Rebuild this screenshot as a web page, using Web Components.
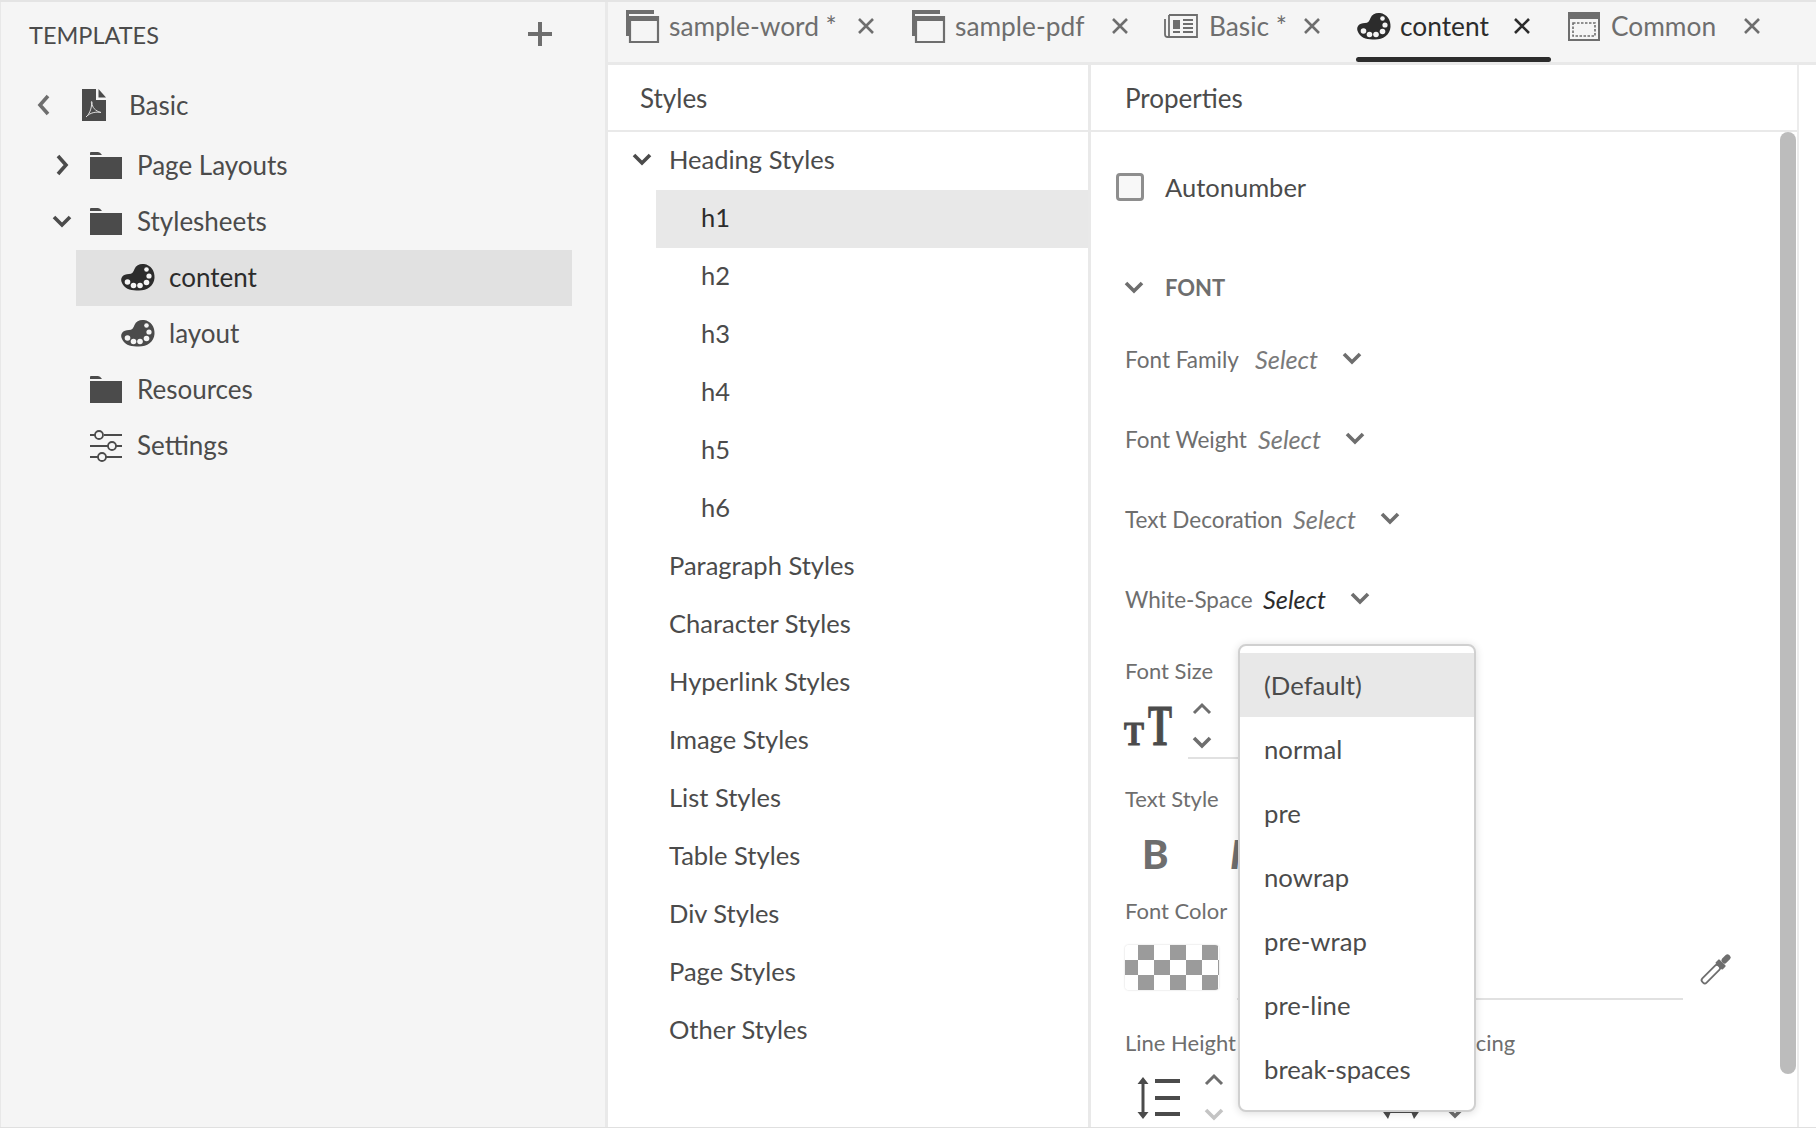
<!DOCTYPE html>
<html>
<head>
<meta charset="utf-8">
<title>Templates</title>
<style>
  html, body { margin: 0; height: 100%; background: #fff; overflow: hidden; }
  body { font-family: Lato, "Open Sans", sans-serif; }
</style>
</head>
<body>
<app-shell>
  <template-tree slot="side">
    <tree-row icon="pdf" twisty="left" style="--left:32px;--tw:26px;--gap:23px;--h:60px;margin-bottom:2px">Basic</tree-row>
    <tree-row icon="folder" twisty="right" style="--left:50px;--tw:16px;--gap:15px">Page Layouts</tree-row>
    <tree-row icon="folder" twisty="down" style="--left:50px;--tw:16px;--gap:15px">Stylesheets</tree-row>
    <tree-row icon="palette" selected style="--left:44px;--gap:14px;--mark:76px">content</tree-row>
    <tree-row icon="palette" style="--left:120px;--gap:14px">layout</tree-row>
    <tree-row icon="folder" style="--left:90px;--gap:15px">Resources</tree-row>
    <tree-row icon="sliders" style="--left:90px;--gap:15px">Settings</tree-row>
  </template-tree>

  <tab-bar slot="tabs">
    <doc-tab icon="window" width="286">sample-word *</doc-tab>
    <doc-tab icon="window" width="252" style="--x:35px">sample-pdf</doc-tab>
    <doc-tab icon="news" width="192" style="--x:35px">Basic *</doc-tab>
    <doc-tab icon="palette" width="212" active>content</doc-tab>
    <doc-tab icon="frame" width="230">Common</doc-tab>
  </tab-bar>

  <styles-panel slot="styles">
    <style-row open>Heading Styles</style-row>
    <style-row sub selected>h1</style-row>
    <style-row sub>h2</style-row>
    <style-row sub>h3</style-row>
    <style-row sub>h4</style-row>
    <style-row sub>h5</style-row>
    <style-row sub>h6</style-row>
    <style-row>Paragraph Styles</style-row>
    <style-row>Character Styles</style-row>
    <style-row>Hyperlink Styles</style-row>
    <style-row>Image Styles</style-row>
    <style-row>List Styles</style-row>
    <style-row>Table Styles</style-row>
    <style-row>Div Styles</style-row>
    <style-row>Page Styles</style-row>
    <style-row>Other Styles</style-row>
  </styles-panel>

  <props-panel slot="props">
    <select-field label="Font Family" width="130">Select</select-field>
    <select-field label="Font Weight" width="133">Select</select-field>
    <select-field label="Text Decoration" width="168">Select</select-field>
    <select-field label="White-Space" width="138" active>Select</select-field>
    <drop-menu slot="menu">
      <menu-item selected>(Default)</menu-item>
      <menu-item>normal</menu-item>
      <menu-item>pre</menu-item>
      <menu-item>nowrap</menu-item>
      <menu-item>pre-wrap</menu-item>
      <menu-item>pre-line</menu-item>
      <menu-item>break-spaces</menu-item>
    </drop-menu>
  </props-panel>
</app-shell>

<script>
const ICONS = {
  chevronLeft: [14, 24, '<path d="M11 3 3 12l8 9" fill="none" stroke="currentColor" stroke-width="3.6"/>'],
  chevronRight: [14, 24, '<path d="M3 3l8 9-8 9" fill="none" stroke="currentColor" stroke-width="3.6"/>'],
  chevronDown: [20, 14, '<path d="M2 3l8 8 8-8" fill="none" stroke="currentColor" stroke-width="3.6"/>'],
  chevronUp: [20, 14, '<path d="M2 11l8-8 8 8" fill="none" stroke="currentColor" stroke-width="3"/>'],
  plus: [24, 24, '<path d="M12 0v24M0 12h24" fill="none" stroke="currentColor" stroke-width="4"/>'],
  close: [18, 18, '<path d="M2 2l14 14M16 2 2 16" fill="none" stroke="currentColor" stroke-width="2.6"/>'],
  folder: [32, 28, '<path d="M0 4V2q0-1 1-1h7q2 0 4 3z" fill="currentColor"/><path d="M0 6h32v22H0z" fill="currentColor"/>'],
  pdf: [24, 32, '<path d="M0 0h14v11h10v21H0z" fill="currentColor"/><path d="M16.500 0 24 8.500h-7.500z" fill="currentColor"/><path d="M4 28c3-2 6-9 5.500-14-1-2 1-2 .5 0 0 4 3 8 9 9.500-5-1-11 0-15 4.500z" fill="none" stroke="#ddd" stroke-width="1"/>'],
  palette: [35, 28, '<path d="M2.500 21C-1 15 3 11 9 11c3 0 4.500-2 5.500-5C16 2 20 .5 24 1c7 1 11 7 10.500 14C34 23 27 27.500 19 27.500 12 27.500 6 27 2.500 21z" fill="currentColor"/><g fill="#f5f5f5"><circle cx="7.500" cy="19" r="2.800"/><circle cx="13.500" cy="22.500" r="2.800"/><circle cx="20" cy="22.500" r="2.800"/><circle cx="26.500" cy="19.500" r="2.800"/><circle cx="29" cy="13" r="2.600"/><circle cx="26.500" cy="6.500" r="2.300"/></g>'],
  sliders: [32, 30, '<g fill="none" stroke="currentColor" stroke-width="1.800"><path d="M0 5h5M14 5h18M0 16h18M26 16h6M0 27h8M16 27h16"/><circle cx="9" cy="5" r="4"/><circle cx="22" cy="16" r="4"/><circle cx="12" cy="27" r="4"/></g>'],
  window: [32, 33, '<path d="M0 0h28v4H3v22H0z" fill="currentColor"/><path d="M4 7h28v25H4z" fill="none" stroke="currentColor" stroke-width="2.200"/><path d="M4 7h28v4H4z" fill="currentColor"/>'],
  news: [34, 24, '<g fill="none" stroke="currentColor" stroke-width="1.800"><path d="M5 1h28v22H5"/><path d="M5 1v22H3Q1 23 1 20V5"/><path d="M19 6h10M19 10h10M19 14h10M19 18h10M9 18h7"/></g><path d="M9 6h7v9H9z" fill="currentColor"/>'],
  frame: [32, 29, '<path d="M1 1h30v27H1z" fill="none" stroke="currentColor" stroke-width="2"/><path d="M0 0h32v7H0z" fill="currentColor"/><path d="M5 11h22v13H5z" fill="none" stroke="currentColor" stroke-width="1.600" stroke-dasharray="2.500 1.500"/>'],
  dropper: [33, 33, '<g transform="rotate(45 16.500 16.500)"><rect x="13.500" y="13" width="6" height="23" rx="2.500" fill="none" stroke="currentColor" stroke-width="1.800"/><rect x="11.500" y="8" width="10" height="5.500" rx="1" fill="currentColor"/><rect x="13.500" y="-2" width="6" height="10" rx="2.500" fill="currentColor"/></g>'],
  lineHeight: [42, 42, '<path d="M5 3v36" stroke="currentColor" stroke-width="3"/><path d="M5 0l5.500 7h-11zM5 42l5.500-7h-11z" fill="currentColor"/><path d="M17 4h25M17 21h25M17 37h25" stroke="currentColor" stroke-width="4"/>'],
  letterSpacing: [40, 44, '<path d="M5 34h30" stroke="currentColor" stroke-width="4"/><path d="M0 32h11l-4 10zM40 32H29l4 10z" fill="currentColor"/><path d="M4 20V4h32v16" fill="none" stroke="currentColor" stroke-width="4"/>']
};

class UiIcon extends HTMLElement {
  constructor() {
    super();
    this.attachShadow({ mode: 'open' });
  }
  connectedCallback() {
    const [w, h, body] = ICONS[this.getAttribute('name')];
    this.shadowRoot.innerHTML = `
      <style>
        :host { display: inline-flex; flex: none; }
        svg { display: block; overflow: visible; }
      </style>
      <svg width="${w}" height="${h}" viewBox="0 0 ${w} ${h}">${body}</svg>`;
  }
}

class AppShell extends HTMLElement {
  constructor() {
    super();
    this.attachShadow({ mode: 'open' });
  }
  connectedCallback() {
    this.shadowRoot.innerHTML = `
      <style>
        :host {
          display: grid;
          grid-template-columns: 605px 1fr;
          width: 1816px;
          height: 1128px;
          box-sizing: border-box;
          border-top: 2px solid #e4e4e4;
          border-bottom: 1px solid #e0e0e0;
          overflow: hidden;
        }
        .main { display: flex; flex-direction: column; border-left: 3px solid #e9e9e9; min-height: 0; }
        .panels { flex: 1; display: flex; min-height: 0; }
      </style>
      <slot name="side"></slot>
      <div class="main">
        <slot name="tabs"></slot>
        <div class="panels">
          <slot name="styles"></slot>
          <slot name="props"></slot>
        </div>
      </div>`;
  }
}

class TemplateTree extends HTMLElement {
  constructor() {
    super();
    this.attachShadow({ mode: 'open' });
  }
  connectedCallback() {
    this.shadowRoot.innerHTML = `
      <style>
        :host { display: block; background: #f5f5f5; color: #4b4b4b; font-size: 26px; box-shadow: inset 1px 0 0 #e8e8e8; }
        .head { display: flex; align-items: center; justify-content: space-between; height: 74px; padding: 0 53px 8px 29px; box-sizing: border-box; }
        .title { font-size: 23.500px; color: #4b4b4b; }
        ui-icon { color: #6e6e6e; margin-top: -2px; }
      </style>
      <div class="head"><span class="title">TEMPLATES</span><ui-icon name="plus"></ui-icon></div>
      <slot></slot>`;
  }
}

class TreeRow extends HTMLElement {
  constructor() {
    super();
    this.attachShadow({ mode: 'open' });
  }
  connectedCallback() {
    const tw = this.getAttribute('twisty');
    const name = { left: 'chevronLeft', right: 'chevronRight', down: 'chevronDown' }[tw];
    this.shadowRoot.innerHTML = `
      <style>
        :host {
          display: flex;
          align-items: center;
          height: var(--h, 56px);
          box-sizing: border-box;
          margin-left: var(--mark, 0);
          width: 496px;
          padding-left: var(--left, 0);
          padding-bottom: 2px;
          white-space: nowrap;
        }
        :host(:not([selected])) { width: auto; }
        :host([selected]) { background: #e1e1e1; color: #2c2c2c; }
        .tw { width: 24px; display: flex; justify-content: center; margin-right: var(--tw, 0); color: #4b4b4b; }
        .ic { display: flex; margin-right: var(--gap, 14px); }
        :host([twisty="left"]) .tw { color: #6e6e6e; }
      </style>
      ${name ? `<span class="tw"><ui-icon name="${name}"></ui-icon></span>` : ''}
      <span class="ic"><ui-icon name="${this.getAttribute('icon')}"></ui-icon></span>
      <slot></slot>`;
  }
}

class TabBar extends HTMLElement {
  constructor() {
    super();
    this.attachShadow({ mode: 'open' });
  }
  connectedCallback() {
    this.shadowRoot.innerHTML = `
      <style>
        :host { display: flex; flex: none; height: 63px; box-sizing: border-box; padding-left: 18px; background: #f5f5f5; border-bottom: 3px solid #e9e9e9; }
      </style>
      <slot></slot>`;
  }
}

class DocTab extends HTMLElement {
  constructor() {
    super();
    this.attachShadow({ mode: 'open' });
  }
  connectedCallback() {
    this.shadowRoot.innerHTML = `
      <style>
        :host { display: flex; flex-direction: column; flex: none; width: ${this.getAttribute('width')}px; color: #6e6e6e; font-size: 26.300px; white-space: nowrap; }
        :host([active]) { color: #2c2c2c; }
        .row { display: flex; align-items: center; height: 48px; margin-bottom: 7px; }
        .label { margin-left: 11px; }
        .x { margin-left: auto; margin-right: var(--x, 37px); display: flex; }
        .bar { height: 5px; width: 195px; border-radius: 3px; background: transparent; }
        :host([active]) .bar { background: #2c2c2c; }
        :host([active]) .label { margin-left: 9px; }
      </style>
      <div class="row">
        <ui-icon name="${this.getAttribute('icon')}"></ui-icon>
        <span class="label"><slot></slot></span>
        <span class="x"><ui-icon name="close"></ui-icon></span>
      </div>
      <div class="bar"></div>`;
  }
}

class PanelHead extends HTMLElement {
  constructor() {
    super();
    this.attachShadow({ mode: 'open' });
  }
  connectedCallback() {
    this.shadowRoot.innerHTML = `
      <style>
        :host { display: flex; align-items: center; flex: none; height: 67px; box-sizing: border-box; border-bottom: 2px solid #e9e9e9; font-size: 26px; color: #4b4b4b; }
      </style>
      <slot></slot>`;
  }
}

class StylesPanel extends HTMLElement {
  constructor() {
    super();
    this.attachShadow({ mode: 'open' });
  }
  connectedCallback() {
    this.shadowRoot.innerHTML = `
      <style>
        :host { display: flex; flex-direction: column; flex: none; width: 480px; box-sizing: content-box; border-right: 3px solid #e9e9e9; background: #fff; overflow: hidden; }
        panel-head { padding-left: 32px; }
      </style>
      <panel-head>Styles</panel-head>
      <slot></slot>`;
  }
}

class StyleRow extends HTMLElement {
  constructor() {
    super();
    this.attachShadow({ mode: 'open' });
  }
  connectedCallback() {
    const open = this.hasAttribute('open');
    this.shadowRoot.innerHTML = `
      <style>
        :host { display: flex; align-items: center; height: 58px; box-sizing: border-box; padding: 0 0 5px 61px; font-size: 25.500px; color: #4b4b4b; white-space: nowrap; }
        :host([sub]) { margin-left: 48px; padding-left: 45px; }
        :host([selected]) { background: #e8e8e8; color: #2c2c2c; }
        .tw { display: flex; width: 20px; margin-left: -37px; margin-right: 17px; }
      </style>
      ${open ? '<span class="tw"><ui-icon name="chevronDown"></ui-icon></span>' : ''}
      <slot></slot>`;
  }
}

class SelectField extends HTMLElement {
  constructor() {
    super();
    this.attachShadow({ mode: 'open' });
  }
  connectedCallback() {
    this.shadowRoot.innerHTML = `
      <style>
        :host { display: flex; align-items: center; height: 80px; white-space: nowrap; }
        .label { width: ${this.getAttribute('width')}px; font-size: 22.500px; color: #6e6e6e; }
        .value { width: 62px; margin-right: 25px; font-size: 25.300px; font-style: italic; color: #7a7a7a; }
        :host([active]) .value { color: #2c2c2c; }
        ui-icon { color: #6e6e6e; margin-top: -3px; }
      </style>
      <span class="label">${this.getAttribute('label')}</span>
      <span class="value"><slot></slot></span>
      <ui-icon name="chevronDown"></ui-icon>`;
  }
}

class PropsPanel extends HTMLElement {
  constructor() {
    super();
    this.attachShadow({ mode: 'open' });
  }
  connectedCallback() {
    this.shadowRoot.innerHTML = `
      <style>
        :host { position: relative; display: flex; flex-direction: column; flex: none; width: 706px; border-right: 2px solid #ececec; background: #fff; overflow: hidden; margin-right: 17px; }
        panel-head { padding-left: 34px; }
        .wrap { flex: 1; display: flex; min-height: 0; }
        .body { flex: 1; min-width: 0; overflow: hidden; color: #6e6e6e; }
        .thumb { flex: none; width: 16px; height: 942px; margin: 0 1px 0 0; border-radius: 8px; background: #bcbcbc; }
        .check { display: flex; align-items: center; height: 56px; margin-top: 27px; padding-left: 25px; font-size: 25.500px; color: #4b4b4b; }
        .box { width: 28px; height: 28px; box-sizing: border-box; border: 3px solid #8e8e8e; border-radius: 4px; background: #f8f8f8; margin-right: 21px; }
        .section { display: flex; align-items: center; height: 40px; margin-top: 52px; padding-left: 33px; font-size: 22px; font-weight: 700; color: #6e6e6e; }
        .section ui-icon { margin-right: 21px; }
        .fields { margin-top: 12px; padding-left: 34px; }
        .label { display: block; height: 30px; line-height: 30px; padding-left: 34px; font-size: 22px; color: #6e6e6e; white-space: nowrap; }
        .size { display: flex; height: 73px; padding-left: 33px; }
        .size svg { flex: none; overflow: visible; }
        .stepper { display: flex; flex-direction: column; align-items: center; width: 28px; }
        .sizeval { margin-left: 16px; width: 100px; box-sizing: content-box; border-bottom: 2px solid #e1e1e1; }
        .sizeval .stepper { margin-top: 16px; gap: 19px; }
        .faces { display: flex; align-items: center; height: 54px; margin-top: 13px; padding-left: 51px; color: #6e6e6e; font-size: 40px; }
        .faces b { font-weight: 900; width: 88px; }
        .faces i { font-weight: 900; }
        .color { display: flex; height: 55px; margin-top: 19px; padding-left: 34px; }
        .swatch { flex: none; width: 94px; height: 45px; border-radius: 4px;
          background: repeating-conic-gradient(#ffffff 0 25%, #9b9b9b 0 50%) 13px 0 / 32px 30px;
          box-shadow: 0 0 2px rgba(0,0,0,.2); }
        .hex { flex: none; margin-left: 18px; width: 446px; height: 53px; border-bottom: 2px solid #e1e1e1; }
        .pick { margin: 7px 0 0 17px; color: #6e6e6e; }
        .labels2 { display: flex; margin-top: 28px; }
        .labels2 .label:last-child { padding-left: 0; }
        .labels2 .label:first-child { width: 254px; }
        .tools { display: flex; margin-top: 19px; height: 44px; padding-left: 47px; color: #4b4b4b; }
        .tools .stepper { margin-left: 20px; gap: 18px; color: #6e6e6e; margin-top: -4px; }
        .tools .second { margin-left: 153px; }
        .tools .stepper.s2 { margin-left: 20px; margin-top: 28px; }
        .faint { color: #c4c4c4; }
      </style>
      <panel-head>Properties</panel-head>
      <div class="wrap">
        <div class="body">
          <div class="check"><span class="box"></span>Autonumber</div>
          <div class="section"><ui-icon name="chevronDown"></ui-icon>FONT</div>
          <div class="fields"><slot></slot></div>
          <span class="label" style="margin-top:17px">Font Size</span>
          <div class="size">
            <svg width="48" height="72" viewBox="0 0 48 72" fill="#4b4b4b" stroke="#4b4b4b" stroke-width="1" font-family="'Liberation Serif', serif" font-weight="700">
              <text x="0" y="59" font-size="34" textLength="20" lengthAdjust="spacingAndGlyphs">T</text>
              <text x="24" y="59" font-size="56" textLength="24" lengthAdjust="spacingAndGlyphs">T</text>
            </svg>
            <div class="sizeval"><div class="stepper" style="color:#6e6e6e"><ui-icon name="chevronUp"></ui-icon><ui-icon name="chevronDown"></ui-icon></div></div>
          </div>
          <span class="label" style="margin-top:25px">Text Style</span>
          <div class="faces"><b>B</b><i>I</i></div>
          <span class="label" style="margin-top:15px">Font Color</span>
          <div class="color">
            <span class="swatch"></span>
            <span class="hex"></span>
            <span class="pick"><ui-icon name="dropper"></ui-icon></span>
          </div>
          <div class="labels2"><span class="label">Line Height</span><span class="label">Letter Spacing</span></div>
          <div class="tools">
            <ui-icon name="lineHeight"></ui-icon>
            <div class="stepper"><ui-icon name="chevronUp"></ui-icon><span class="faint"><ui-icon name="chevronDown"></ui-icon></span></div>
            <span class="second"><ui-icon name="letterSpacing"></ui-icon></span>
            <div class="stepper s2 faint"><ui-icon name="chevronDown"></ui-icon></div>
          </div>
        </div>
        <div class="thumb"></div>
      </div>
      <slot name="menu"></slot>`;
  }
}

class DropMenu extends HTMLElement {
  constructor() {
    super();
    this.attachShadow({ mode: 'open' });
  }
  connectedCallback() {
    this.shadowRoot.innerHTML = `
      <style>
        :host {
          position: absolute;
          left: 147px;
          top: 579px;
          width: 238px;
          height: 468px;
          box-sizing: border-box;
          padding: 7px 0 5px;
          border: 2px solid #d0d0d0;
          border-radius: 8px;
          background: #fff;
          box-shadow: 0 1px 8px rgba(0,0,0,.14);
        }
      </style>
      <slot></slot>`;
  }
}

class MenuItem extends HTMLElement {
  constructor() {
    super();
    this.attachShadow({ mode: 'open' });
  }
  connectedCallback() {
    this.shadowRoot.innerHTML = `
      <style>
        :host { display: flex; align-items: center; height: 64px; padding-left: 24px; font-size: 25.700px; color: #4b4b4b; }
        :host([selected]) { background: #e8e8e8; }
      </style>
      <slot></slot>`;
  }
}

customElements.define('ui-icon', UiIcon);
customElements.define('panel-head', PanelHead);
customElements.define('tree-row', TreeRow);
customElements.define('template-tree', TemplateTree);
customElements.define('doc-tab', DocTab);
customElements.define('tab-bar', TabBar);
customElements.define('style-row', StyleRow);
customElements.define('styles-panel', StylesPanel);
customElements.define('select-field', SelectField);
customElements.define('menu-item', MenuItem);
customElements.define('drop-menu', DropMenu);
customElements.define('props-panel', PropsPanel);
customElements.define('app-shell', AppShell);
</script>
</body>
</html>
